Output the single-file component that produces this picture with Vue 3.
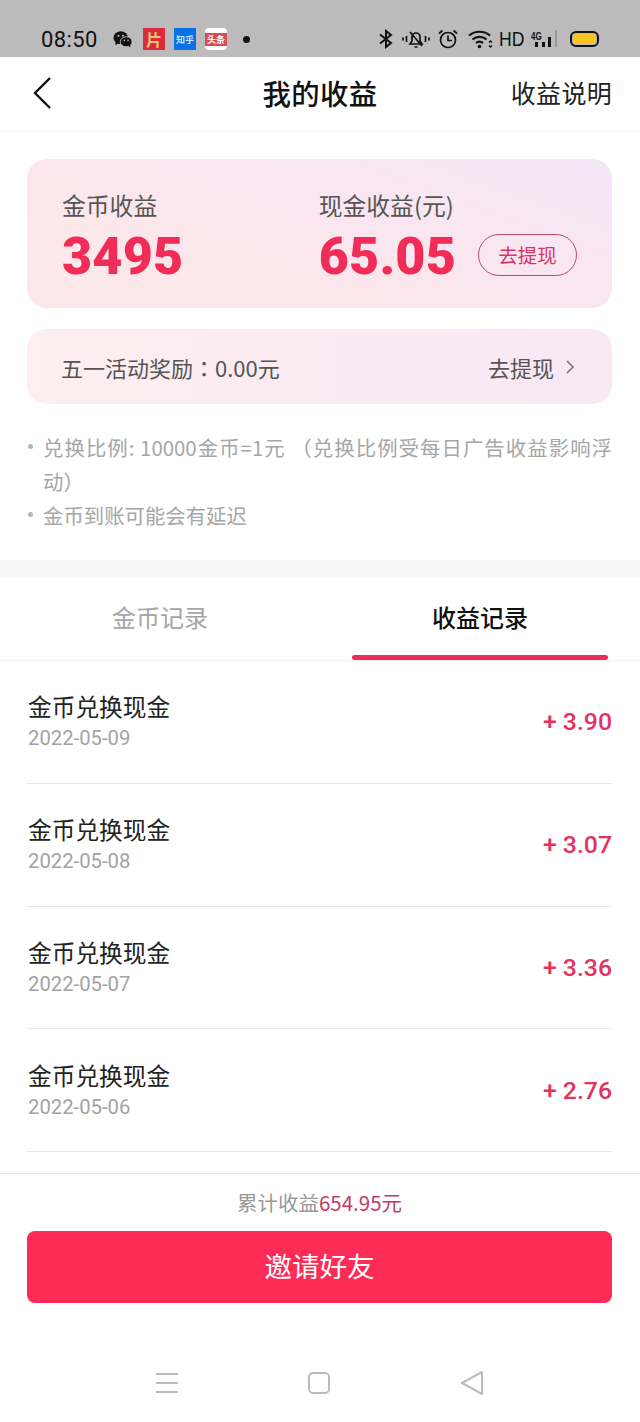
<script setup>
const records = [
  { date: '2022-05-09', amount: '+ 3.90' },
  { date: '2022-05-08', amount: '+ 3.07' },
  { date: '2022-05-07', amount: '+ 3.36' },
  { date: '2022-05-06', amount: '+ 2.76' },
]
</script>

<template>
  <div class="page">
    <div class="status">
      <span class="time">08:50</span>
      <svg class="wechat" width="20" height="19" viewBox="0 0 22 20">
        <ellipse cx="8.5" cy="8" rx="8" ry="7" fill="#111" />
        <path d="M3 12 L2.500 16 L7 14Z" fill="#111" />
        <ellipse cx="14.500" cy="12.500" rx="6.500" ry="5.500" fill="#111" stroke="#bbb" stroke-width="1" />
        <path d="M17 17 L19 19 L19 15Z" fill="#111" />
        <circle cx="6" cy="6" r="1.100" fill="#bbb" /><circle cx="11" cy="6" r="1.100" fill="#bbb" />
        <circle cx="12.500" cy="11" r=".9" fill="#bbb" /><circle cx="16.500" cy="11" r=".9" fill="#bbb" />
      </svg>
      <span class="app pian">片</span>
      <span class="app zhihu">知乎</span>
      <span class="app toutiao"><i>头条</i></span>
      <span class="dot"></span>
      <span class="spacer"></span>
      <svg width="14" height="20" viewBox="0 0 14 20" fill="none" stroke="#111" stroke-width="2">
        <path d="M1 5.500 L12 14 L7 18 V2 L12 6 L1 14.500" />
      </svg>
      <svg class="bell" width="28" height="20" viewBox="0 0 28 20" fill="none" stroke="#111" stroke-width="1.700">
        <path d="M1 8.500v3M4.500 7v6M23.500 7v6M27 8.500v3" />
        <path d="M8 15h12l-2-3V8a4 4 0 0 0-8 0v4zM12.500 18h3M8 3l12 14" />
      </svg>
      <svg class="alarm" width="20" height="20" viewBox="0 0 20 20" fill="none" stroke="#111" stroke-width="1.700">
        <circle cx="10" cy="11" r="7.500" /><path d="M10 6.500V11.500H14M1 4.500 4.500 1.500M19 4.500 15.500 1.500" />
      </svg>
      <svg class="wifi" width="25" height="20" viewBox="0 0 25 20" fill="none" stroke="#111" stroke-width="2.200">
        <path d="M1 6.500c6-5 15-5 21 0M4.500 10.500c4-3.500 10-3.500 14 0M8 14c2-1.500 5-1.500 7 0" />
        <circle cx="11.500" cy="17.500" r="1.800" fill="#111" stroke="none" />
        <path d="M21 13.500 22.500 12 24 13.500M21 16.500 22.500 18 24 16.500" stroke-width="1.300" />
      </svg>
      <span class="hd">HD</span>
      <span class="net">
        <b>4G</b>
        <svg width="27" height="20" viewBox="0 0 27 20">
          <rect x="4" y="13" width="3" height="5" fill="#111" />
          <rect x="11" y="13" width="3" height="5" fill="#111" />
          <rect x="17" y="8" width="3" height="10" fill="#111" />
          <rect x="24" y="1" width="2" height="17" fill="#999" />
        </svg>
      </span>
      <span class="battery"><i></i></span>
    </div>

    <header class="nav">
      <svg class="back" width="20" height="34" viewBox="0 0 20 34" fill="none" stroke="#111" stroke-width="2.400">
        <path d="M18 2 3 17 18 32" />
      </svg>
      <h1>我的收益</h1>
      <span class="explain">收益说明</span>
    </header>

    <section class="summary">
      <div class="coin">
        <span class="label">金币收益</span>
        <strong>3495</strong>
      </div>
      <div class="cash">
        <span class="label">现金收益(元)</span>
        <div class="cash-row">
          <strong>65.05</strong>
          <span class="withdraw">去提现</span>
        </div>
      </div>
    </section>

    <section class="promo">
      <span>五一活动奖励<span class="colon">：</span>0.00元</span>
      <span class="go">去提现
        <svg width="10" height="16" viewBox="0 0 10 16" fill="none" stroke="#777" stroke-width="1.600"><path d="M2 2 8 8 2 14" /></svg>
      </span>
    </section>

    <ul class="notes">
      <li><span class="full">兑换比例: 10000金币=1元 （兑换比例受每日广告收益影响浮</span>动）</li>
      <li>金币到账可能会有延迟</li>
    </ul>

    <div class="gap"></div>

    <div class="tabs">
      <div class="tab">金币记录</div>
      <div class="tab active">收益记录</div>
    </div>

    <div class="list">
      <div class="row" v-for="r in records" :key="r.date">
        <div class="row-text">
          <div class="title">金币兑换现金</div>
          <div class="date">{{ r.date }}</div>
        </div>
        <div class="amount">{{ r.amount }}</div>
      </div>
    </div>

    <footer class="foot">
      <div class="total">累计收益<em>654.95元</em></div>
      <button class="invite">邀请好友</button>
    </footer>

    <div class="softkeys">
      <svg width="24" height="22" viewBox="0 0 24 22" fill="none" stroke="#bbb" stroke-width="2"><path d="M1 2H23M1 11H23M1 20H23" /></svg>
      <svg width="22" height="24" viewBox="0 0 22 24" fill="none" stroke="#bbb" stroke-width="2"><rect x="1" y="2" width="20" height="20" rx="4" /></svg>
      <svg width="26" height="26" viewBox="0 0 26 26" fill="none" stroke="#bbb" stroke-width="2" stroke-linejoin="round"><path d="M23 2V24L3 13Z" /></svg>
    </div>
  </div>
</template>

<style>
html, body { margin: 0; background: #fff; }
</style>

<style scoped>
.page {
  width: 640px;
  height: 1422px;
  display: flex;
  flex-direction: column;
  overflow: hidden;
  background: #fff;
  font-family: "Noto Sans CJK SC", "Noto Sans", sans-serif;
}
.status {
  height: 57px;
  flex: none;
  box-sizing: border-box;
  background: #bbb;
  display: flex;
  align-items: center;
  padding: 21px 41px 0 41px;
  color: #111;
}
.time { font: 400 22px Roboto, sans-serif; letter-spacing: .4px; width: 72px; }
.wechat { margin-right: 10px; }
.app {
  width: 22px;
  height: 22px;
  margin-right: 9px;
  flex: none;
  display: flex;
  align-items: center;
  justify-content: center;
  overflow: hidden;
}
.pian { background: #dc2a3f; color: #f6c46c; font-size: 16px; font-weight: 700; }
.zhihu { background: #0a70e8; color: #bfe4ff; font-size: 9px; font-weight: 700; }
.toutiao { background: #fff; border-radius: 4px; }
.toutiao i { display: block; width: 100%; background: #d94a58; color: #fff; font-size: 9px; font-weight: 700; font-style: normal; text-align: center; line-height: 13px; }
.dot { width: 7px; height: 7px; border-radius: 50%; background: #111; margin-left: 7px; }
.spacer { flex: 1; }
.bell { margin-left: 9px; }
.alarm { margin-left: 8px; }
.wifi { margin-left: 10px; }
.hd { font: 400 20px "Liberation Sans", sans-serif; margin-left: 6px; transform: scaleX(.88); width: 24px; transform-origin: left; }
.net { position: relative; margin-left: 8px; display: flex; }
.net b { position: absolute; left: 0; top: 2px; font: 700 10px "Liberation Sans", sans-serif; transform: scaleX(.8); transform-origin: left; }
.net svg { width: 27px; }
.battery {
  width: 29px;
  height: 16px;
  box-sizing: border-box;
  margin-left: 12px;
  border: 2px solid #111;
  border-radius: 6px;
  padding: 1px;
  display: flex;
}
.battery i { flex: 1; background: #f6c524; border-radius: 3px; }

.nav {
  height: 75px;
  flex: none;
  box-sizing: border-box;
  display: grid;
  grid-template-columns: 1fr auto 1fr;
  align-items: center;
  padding: 0 28px 2px 32px;
  border-bottom: 1px solid #f2f2f2;
  color: #111;
}
.back { justify-self: start; }
h1 { margin: 0 1px 0 -3px; font-size: 28.400px; font-weight: 500; line-height: 40px; letter-spacing: .4px; }
.explain { justify-self: end; font-size: 25px; font-weight: 400; color: #222; letter-spacing: .3px; margin-top: -2px; }

.summary {
  flex: none;
  height: 149px;
  box-sizing: border-box;
  margin: 27px 28px 0 27px;
  padding: 30px 35px 0;
  border-radius: 20px;
  background: linear-gradient(20deg, #fde8e8 0%, #fbe6ee 50%, #f4e6f8 100%);
  display: flex;
}
.coin { width: 259px; }
.label { display: block; font-size: 23.800px; line-height: 36px; color: #555; white-space: nowrap; margin-top: -2px; }
.summary strong {
  display: block;
  font: 900 52px/50px Roboto, Lato, sans-serif;
  color: #f12c56;
  margin-top: 9px;
  letter-spacing: .2px;
}
.cash-row { display: flex; align-items: center; }
.withdraw {
  width: 99px;
  height: 42px;
  box-sizing: border-box;
  margin-left: 22px;
  margin-top: 5px;
  border: 1px solid #b5506f;
  border-radius: 21px;
  color: #d9336a;
  font-size: 19.500px;
  line-height: 39px;
  text-align: center;
}
.promo {
  flex: none;
  height: 75px;
  box-sizing: border-box;
  margin: 21px 28px 0 27px;
  padding: 0 37px 0 34px;
  border-radius: 20px;
  background: linear-gradient(90deg, #fdeef0, #f7e8f4);
  display: flex;
  align-items: center;
  justify-content: space-between;
  font-size: 22px;
  color: #555;
}
.colon { font-family: "Noto Sans CJK TC", sans-serif; }
.go { display: flex; align-items: center; gap: 11px; font-size: 22px; }

.notes {
  flex: none;
  list-style: none;
  margin: 26px 28px 0 27px;
  padding: 0 0 0 16px;
  color: #a6a6a6;
  font-size: 20.400px;
  line-height: 34px;
}
.notes li { position: relative; }
.notes li::before {
  content: "";
  position: absolute;
  left: -15px;
  top: 14px;
  width: 5px;
  height: 5px;
  border-radius: 50%;
  background: #b5b5b5;
}
.full { display: block; text-align: justify; text-align-last: justify; }
.gap { flex: none; height: 17px; margin-top: 28px; background: #f7f7f7; }

.tabs {
  flex: none;
  height: 84px;
  box-sizing: border-box;
  display: flex;
  border-bottom: 1px solid #f0f0f0;
}
.tab {
  position: relative;
  width: 320px;
  padding-top: 18px;
  box-sizing: border-box;
  text-align: center;
  font-size: 24px;
  line-height: 44px;
  color: #a5a5a5;
}
.tab.active { color: #111; font-weight: 500; }
.tab.active::after {
  content: "";
  position: absolute;
  left: 32px;
  right: 32px;
  bottom: 0;
  height: 5px;
  border-radius: 3px;
  background: #ee2d57;
}

.list { flex: 1; min-height: 0; overflow: hidden; padding: 0 28px 0 27px; }
.row {
  height: 122.800px;
  box-sizing: border-box;
  display: flex;
  align-items: center;
  justify-content: space-between;
  border-bottom: 1px solid #e8e8e8;
}
.row-text { padding: 0 0 2px 1px; }
.title { font-size: 23.700px; line-height: 34px; color: #222; }
.date { font: 400 20.300px/28px Roboto, sans-serif; color: #a3a3a3; margin-top: 1px; }
.amount { font: 500 24.800px Roboto, sans-serif; color: #e2335f; }

.foot {
  flex: none;
  height: 130px;
  box-sizing: border-box;
  border-top: 1px solid #e6e6e6;
  padding: 13px 28px 0 27px;
}
.total { text-align: center; font-size: 20.500px; line-height: 30px; color: #999; }
.total em { font-style: normal; color: #c33a66; }
.invite {
  display: block;
  width: 100%;
  height: 72px;
  margin-top: 14px;
  padding: 0 0 4px;
  border: 0;
  border-radius: 8px;
  background: #fd2b55;
  color: #fff;
  font: 400 27.500px "Noto Sans CJK SC", sans-serif;
}
.softkeys {
  flex: none;
  height: 119px;
  box-sizing: border-box;
  display: flex;
  align-items: center;
  padding: 40px 155px 0 155px;
  justify-content: space-between;
}
</style>
